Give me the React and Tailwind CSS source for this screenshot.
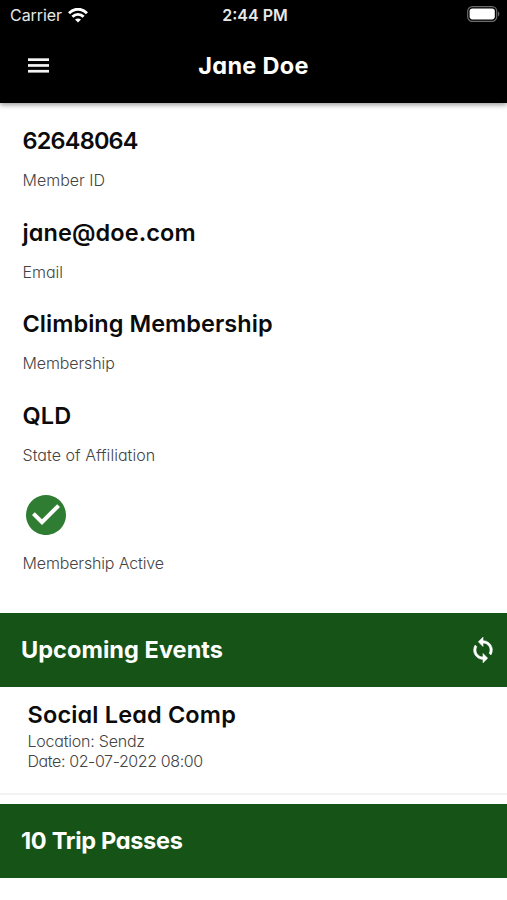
import { MdCheckCircle } from "react-icons/md";

const rounded = "font-['Inter','Lato',sans-serif] [font-feature-settings:'cv11'] whitespace-nowrap";

function StatusBar() {
  return (
    <div className="grid h-[30px] grid-cols-[1fr_auto_1fr] items-center pl-[10px] pr-[7px] font-['Inter',sans-serif] text-[16px] text-[#e8e8e8]">
      <div className="flex items-center gap-[6px]">
        <span className="tracking-[-0.05px]">Carrier</span>
        <svg viewBox="0 0 20 15" className="h-[15px] w-5 fill-none stroke-white stroke-[2.9]">
          <path d="M1 5.2C6-.1 14-.1 19 5.2" />
          <path d="M4.4 8.8c3.2-3.2 8-3.2 11.2 0" />
          <path d="M10 14.6 7 11.6c1.7-1.5 4.3-1.5 6 0z" className="fill-white stroke-none" />
        </svg>
      </div>
      <span className="font-semibold">2:44 PM</span>
      <svg viewBox="0 0 33 16" className="-mt-0.5 h-4 w-[33px] justify-self-end">
        <rect x="0.7" y="0.7" width="29" height="14.6" rx="4.6" className="fill-none stroke-[#6b6b6b] stroke-[1.2]" />
        <rect x="2.6" y="2.6" width="25.2" height="10.8" rx="2.8" className="fill-white" />
        <path d="M31 5.6c1.8.7 1.8 4.1 0 4.8z" className="fill-[#6b6b6b]" />
      </svg>
    </div>
  );
}

function MenuIcon() {
  return (
    <svg viewBox="0 0 21 15" className="-mt-px h-[15px] w-[21px] fill-[#f4f4f4]">
      <rect y="0.3" width="21" height="2.7" />
      <rect y="6.1" width="21" height="2.7" />
      <rect y="11.9" width="21" height="2.7" />
    </svg>
  );
}

function SyncIcon() {
  return (
    <svg viewBox="0 0 24 24" className="size-7 fill-white stroke-white stroke-[0.5]">
      <path d="M12 4V1L8 5l4 4V6c3.31 0 6 2.69 6 6 0 1.01-.25 1.97-.7 2.8l1.46 1.46A7.93 7.93 0 0 0 20 12c0-4.42-3.58-8-8-8z" />
      <path d="M12 18c-3.31 0-6-2.69-6-6 0-1.01.25-1.97.7-2.8L5.24 7.74A7.93 7.93 0 0 0 4 12c0 4.42 3.58 8 8 8v3l4-4-4-4v3z" />
    </svg>
  );
}

function Field({ value, label, spacing = "", labelSpacing = "" }) {
  return (
    <div className="flex h-[91.6px] flex-col">
      <div className={`${rounded} h-[30px] text-[23.5px] leading-[30px] font-semibold text-[#0b0b0b] ${spacing}`}>{value}</div>
      <div className={`${rounded} mt-[14px] h-5 text-[16px] leading-5 font-light text-[#444] ${labelSpacing}`}>{label}</div>
    </div>
  );
}

function Banner({ title, spacing = "", children }) {
  return (
    <div className="flex h-[74px] items-center justify-between bg-[#165316] pr-[10.5px] pl-[21px] text-white">
      <h2 className={`${rounded} text-[23.5px] font-bold ${spacing}`}>{title}</h2>
      {children}
    </div>
  );
}

export default function App() {
  return (
    <div className="h-[900px] w-full overflow-hidden bg-white">
      <header className="relative h-[103px] bg-black shadow-[0_2px_5px_rgba(0,0,0,0.4)]">
        <StatusBar />
        <div className="grid h-[72px] grid-cols-[1fr_auto_1fr] items-center px-7 text-white">
          <MenuIcon />
          <h1 className={`${rounded} text-[23.5px] font-bold tracking-[0.3px]`}>Jane Doe</h1>
        </div>
      </header>

      <section className="h-[510px] pt-[23px] pl-[22.5px]">
        <Field value="62648064" label="Member ID" spacing="tracking-[-0.8px]" />
        <Field value="jane@doe.com" label="Email" spacing="tracking-[0.1px]" />
        <Field value="Climbing Membership" label="Membership" spacing="tracking-[0.04px]" labelSpacing="tracking-[-0.12px]" />
        <Field value="QLD" label="State of Affiliation" spacing="tracking-[0.2px]" labelSpacing="tracking-[0.04px]" />
        <MdCheckCircle className="-mt-px -ml-[0.5px] size-12 text-[#2e7d32]" />
        <div className={`${rounded} mt-[14px] text-[16px] leading-5 font-light tracking-[-0.15px] text-[#444]`}>Membership Active</div>
      </section>

      <Banner title="Upcoming Events" spacing="tracking-[0.05px]">
        <SyncIcon />
      </Banner>

      <section className="h-[108px] border-b-2 border-[#f3f3f3] pt-[13px] pl-[27.5px]">
        <h3 className={`${rounded} text-[23.5px] leading-[30px] font-semibold tracking-[0.15px] text-[#0b0b0b]`}>Social Lead Comp</h3>
        <p className={`${rounded} mt-px text-[16px] leading-5 font-light tracking-[-0.22px] text-[#444]`}>Location: Sendz</p>
        <p className={`${rounded} text-[16px] leading-5 font-light tracking-[-0.4px] text-[#444]`}>Date: 02-07-2022 08:00</p>
      </section>

      <div className="pt-[9px]">
        <Banner title="10 Trip Passes" spacing="tracking-[-0.3px]" />
      </div>
    </div>
  );
}
